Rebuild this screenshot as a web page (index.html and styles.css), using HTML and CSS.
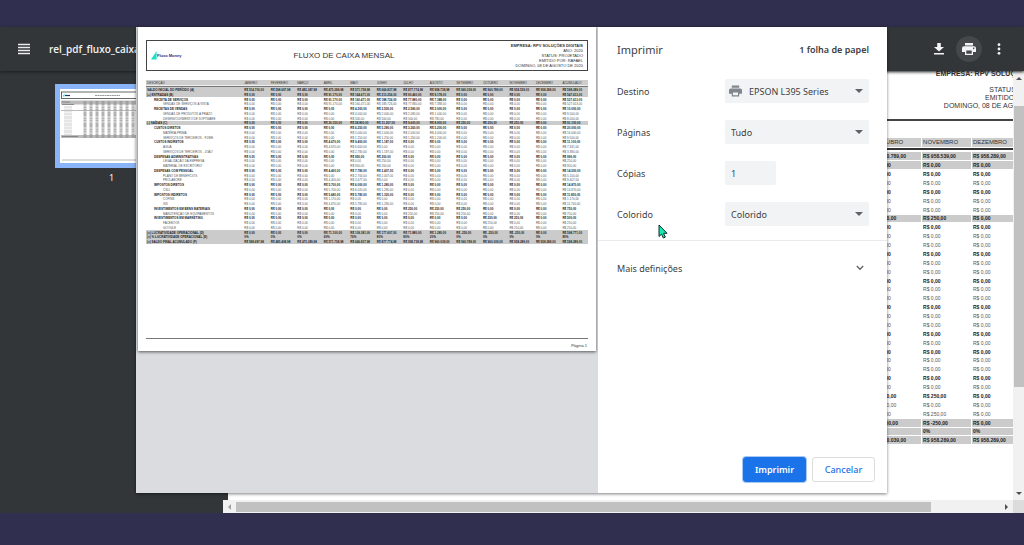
FILE: index.html
```html
<!DOCTYPE html>
<html lang="pt-BR">
<head>
<meta charset="utf-8">
<title>rel_pdf_fluxo_caixa</title>
<link rel="stylesheet" href="styles.css">
</head>
<body>
<main class="viewer">
  <header class="toolbar">
    <button class="icon-btn menu-btn" aria-label="Menu">
      <svg width="14" height="12" viewBox="0 0 14 12"><path d="M1 1.5h12M1 4.5h12M1 7.5h12M1 10.5h12" stroke="#e8eaed" stroke-width="1.5"/></svg>
    </button>
    <span class="file-name">rel_pdf_fluxo_caixa</span>
    <div class="tools">
      <button class="icon-btn" aria-label="Baixar">
        <svg width="10" height="12" viewBox="0 0 10 12"><path d="M3.2 0h3.6v4H10L5 8.600 0 4h3.200zM0 10h10v1.600H0z" fill="#f1f3f4"/></svg>
      </button>
      <button class="icon-btn active" aria-label="Imprimir">
        <svg width="14" height="12" viewBox="0 0 14 12"><path d="M3 0h8v2.500H3zM2 3.200h10a2 2 0 0 1 2 2V9h-3v3H3V9H0V5.200a2 2 0 0 1 2-2zM4.300 7.500v3.200h5.400V7.500zM11.700 4.600a.7.700 0 1 0 .01 0z" fill="#f1f3f4" fill-rule="evenodd"/></svg>
      </button>
      <button class="icon-btn" aria-label="Mais">
        <svg width="4" height="12" viewBox="0 0 4 12" fill="#f1f3f4"><circle cx="2" cy="1.700" r="1.400"/><circle cx="2" cy="6" r="1.400"/><circle cx="2" cy="10.300" r="1.400"/></svg>
      </button>
    </div>
  </header>

  <div class="workspace">
    <aside class="sidebar">
      <a class="thumb" href="#page-1">
        <svg class="thumb-page" viewBox="0 0 104 74">
          <rect width="104" height="74" fill="#fff"/>
          <rect x="1.500" y="3" width="101" height="6.500" fill="#fff" stroke="#444" stroke-width=".8"/>
          <path d="M2.500 7.500l2-3v3z" fill="#1de9c6"/><path d="M5 6.500h5" stroke="#332c77" stroke-width="1.200"/>
          <path d="M35 6.500h25" stroke="#999" stroke-width="1" stroke-dasharray="2 .4"/>
          <g stroke="#bbb"><path d="M1 13.500h102" stroke-width="4"/><path d="M1 21.500h102" stroke-width="1"/><path d="M1 47.500h102" stroke-width="3"/></g>
          <path d="M2 13h8M2 15.500h12M2 47.500h16" stroke="#777" stroke-width=".8"/>
          <g stroke="#999" stroke-width="3" stroke-dasharray=".7 .4"><path d="M25 12v37M31 12v37M37 12v37M43 12v37M49 12v37M55 12v37M61 12v37M67 12v37M73 12v37"/></g>
          <path d="M8 17v29" stroke="#ccc" stroke-width="8" stroke-dasharray=".6 .8"/>
          <path d="M2 71h100" stroke="#999" stroke-width=".7"/>
        </svg>
      </a>
      <span class="thumb-number">1</span>
    </aside>

    <section class="document">
      <div class="doc-clip">
        <article class="report report-large" id="page-1"></article>
      </div>
      <div class="scroll-v"><i class="tri up"></i><div class="track-v"><div class="thumb-v"></div></div><i class="tri down"></i></div>
      <div class="scroll-h"><i class="tri left"></i><div class="track-h"><div class="thumb-h"></div></div><i class="tri right"></i></div>
      <div class="scroll-corner"></div>
    </section>
  </div>

  <div class="dialog" role="dialog" aria-labelledby="dialog-title">
    <div class="preview">
      <article class="report report-small" id="preview-page"></article>
    </div>
    <form class="panel">
      <div class="panel-head">
        <h1 id="dialog-title">Imprimir</h1>
        <strong>1 folha de papel</strong>
      </div>
      <div class="fields">
        <label for="dest">Destino</label>
        <div class="select with-icon">
          <svg class="printer" width="13" height="12" viewBox="0 0 14 12"><path d="M3 0h8v2.500H3zM2 3.200h10a2 2 0 0 1 2 2V9h-3v3H3V9H0V5.200a2 2 0 0 1 2-2zM4.300 7.500v3.200h5.400V7.500z" fill="#80868b" fill-rule="evenodd"/></svg>
          <select id="dest"><option>EPSON L395 Series</option></select>
        </div>
        <label for="pages">Páginas</label>
        <div class="select"><select id="pages"><option>Tudo</option></select></div>
        <label for="copies">Cópias</label>
        <input id="copies" class="copies" type="text" inputmode="numeric" value="1">
        <label for="color">Colorido</label>
        <div class="select"><select id="color"><option>Colorido</option></select></div>
      </div>
      <button type="button" class="more">Mais definições
        <svg width="8" height="6" viewBox="0 0 8 6"><path d="M.8 1L4 4.300 7.200 1" fill="none" stroke="#5f6368" stroke-width="1.300"/></svg>
      </button>
      <div class="actions">
        <button type="button" class="btn primary">Imprimir</button>
        <button type="button" class="btn">Cancelar</button>
      </div>
    </form>
    <svg class="pointer" width="10" height="15" viewBox="0 0 10 15"><path d="M1 1v11.500l2.500-2.400 1.800 3.900 2-.9-1.800-3.800H9z" fill="#16e8b0" stroke="#0b2b2b" stroke-width="1"/></svg>
  </div>
</main>
<script src="report.js"></script>
</body>
</html>
```
FILE: styles.css
```css
* { box-sizing: border-box; }

body {
  margin: 0;
  height: 100vh;
  display: flex;
  flex-direction: column;
  padding: 27px 0 32px;
  background: #312f4f;
  font-family: "Noto Sans", "Open Sans", sans-serif;
  font-size: 9px;
  color: #3c4043;
}

button, input, select { font: inherit; color: inherit; }

.viewer {
  position: relative;
  flex: 1;
  min-height: 0;
  display: flex;
  flex-direction: column;
  background: #323639;
}

/* Toolbar */
.toolbar {
  position: relative;
  height: 44px;
  flex: none;
  display: flex;
  align-items: center;
  gap: 12px;
  padding: 0 12px 0 11px;
  background: #323639;
  box-shadow: 0 1px 3px #1b1d1f;
}
.icon-btn {
  width: 26px;
  height: 26px;
  padding: 0;
  border: 0;
  border-radius: 50%;
  background: none;
  display: grid;
  place-items: center;
}
.icon-btn.active { background: #44484b; }
.file-name { color: #f1f3f4; font-size: 10px; font-weight: 600; font-family: "Open Sans", sans-serif; }
.tools { display: flex; gap: 4px; margin-left: auto; }

/* Sidebar */
.workspace { flex: 1; min-height: 0; display: flex; }
.sidebar {
  width: 223px;
  flex: none;
  display: flex;
  flex-direction: column;
  align-items: center;
  gap: 3px;
  padding-top: 13px;
}
.thumb { display: block; width: 114px; padding: 5px; background: #8ab4f8; }
.thumb-page { display: block; width: 100%; }
.thumb-number { color: #f1f3f4; line-height: 14px; }

/* Document area and scrollbars */
.document {
  flex: 1;
  min-width: 0;
  display: grid;
  grid-template-columns: minmax(0, 1fr) 11px;
  grid-template-rows: minmax(0, 1fr) 13px;
}
.doc-clip { overflow: hidden; background: #fff; border-left: 5px solid #323639; }
.scroll-v, .scroll-h { background: #f1f1f1; display: flex; align-items: center; }
.scroll-v { flex-direction: column; padding: 6px 0 5px; gap: 26px; }
.scroll-h { padding: 0 5px; gap: 5px; }
.scroll-corner { background: #dcdcdc; }
.track-v { flex: 1; width: 10px; }
.track-h { flex: 1; height: 10px; }
.thumb-v { height: 78%; background: #c1c1c1; }
.thumb-h { height: 100%; width: 91%; background: #c1c1c1; }
.tri { border: 3px solid transparent; flex: none; }
.up { border-top: 0; border-bottom-color: #505050; }
.down { border-bottom: 0; border-top-color: #505050; }
.left { border-left: 0; border-right-color: #a3a3a3; }
.right { border-right: 0; border-left-color: #505050; }

/* Report sheet, shared by the document and the print preview */
.report {
  display: flex;
  flex-direction: column;
  background: #fff;
  color: #333;
  font-family: "Liberation Sans", Arial, sans-serif;
}
.report-head {
  display: flex;
  align-items: center;
  border: 1px solid #444;
}
.report-title { flex: 1; margin: 0; text-align: center; font-weight: 400; white-space: nowrap; }
.report-meta { text-align: right; white-space: nowrap; }
.report-meta p { margin: 0; }
.report-logo { display: flex; align-items: center; color: #30277a; font-weight: 700; }
.report-table { width: 100%; table-layout: fixed; border-collapse: separate; border-spacing: 0; }
.report-table th, .report-table td { padding: 0 0 0 1px; text-align: left; white-space: nowrap; font-weight: 400; }
.report-table .name { width: 22%; }
.report-table thead th { background: #cdcdcd; }
.report-table .item > * { color: #555; }
.report-table .total > * { background: #cbcbcb; }
.report-table .total > *, .report-table .group > * { font-weight: 700; color: #222; }
.report-foot { margin-top: auto; text-align: right; border-top: 1px solid #777; }

.report-large { width: 856px; margin-top: -6px; padding: 0 12px; }
.report-large .report-head { height: 56px; padding: 0 8px 6px; border-width: 2px; }
.report-large .report-logo { font-size: 10px; }
.report-large .report-logo svg { width: 14px; }
.report-large .report-title { font-size: 16px; }
.report-large .report-meta { font-size: 7px; line-height: 8px; }
.report-large .report-table { margin-top: 17px; font-size: 5px; line-height: 7px; }
.report-large thead th { height: 9px; font-size: 6px; }
.report-large .rule td { height: 5px; background: linear-gradient(#fff 1px, #333 1px, #333 3px, #fff 3px); }
.report-large tbody tr > * { height: 9px; border-bottom: 1px solid #fff; }
.report-large tbody tr:nth-child(8n) > * { height: 8px; }
.report-large .total > *, .report-large thead th { border-right: 1px solid #fff; }
.report-large .group .name { padding-left: 15px; }
.report-large .item .name { padding-left: 31px; }
.report-large .report-foot { margin-top: 180px; }

.report-small {
  aspect-ratio: 458 / 324;
  margin: 0 2px;
  padding: 13px 8px 0;
  box-shadow: 0 1px 3px #55585c;
}
.report-small .report-head { height: 31px; padding: 0 4px; }
.report-small .report-logo { width: 34px; font-size: 4px; }
.report-small .report-logo svg { width: 6px; }
.report-small .report-title { font-size: 8px; }
.report-small .report-meta { width: 80px; font-size: 4px; line-height: 5px; }
.report-small .report-table { margin-top: 9px; font-size: 3px; line-height: 4px; }
.report-small thead th { height: 5px; }
.report-small .rule td { height: 2px; background: linear-gradient(#eee 1px, #777 1px); }
.report-small tbody tr > * { height: 5px; }
.report-small tbody tr:nth-child(4n) > * { height: 4px; }
.report-small .group .name { padding-left: 8px; }
.report-small .item .name { padding-left: 17px; }
.report-small .report-foot { font-size: 4px; line-height: 8px; padding: 3px 1px 1px; }

/* Print dialog */
.dialog {
  position: absolute;
  inset: 0 137px 20px 136px;
  display: flex;
  background: #fff;
  box-shadow: 0 1px 3px rgba(0, 0, 0, .5);
}
.preview { flex: 1; min-width: 0; overflow: hidden; background: #dadce0; }
.panel { width: 289px; flex: none; display: flex; flex-direction: column; }
.panel-head {
  display: flex;
  align-items: center;
  justify-content: space-between;
  padding: 15px 18px 15px 19px;
  line-height: 16px;
}
.panel-head h1 { margin: 0; font-size: 11px; font-weight: 400; }
.panel-head strong { font-weight: 600; }
.fields {
  display: grid;
  grid-template-columns: minmax(0, 1fr) 144px;
  align-items: center;
  row-gap: 17px;
  padding: 6px 18px 14px 19px;
  border-bottom: 1px solid #e8eaed;
}
.select {
  display: grid;
  align-items: center;
  height: 24px;
  border-radius: 2px;
  background: #f1f3f4;
}
.select > *, .select::after { grid-area: 1 / 1; }
.select::after {
  content: "";
  justify-self: end;
  margin-right: 6px;
  border: 4px solid transparent;
  border-top-color: #5f6368;
  border-bottom: 0;
  pointer-events: none;
}
.select select {
  appearance: none;
  width: 100%;
  height: 24px;
  padding: 0 6px;
  border: 0;
  background: none;
}
.with-icon select { padding-left: 24px; }
.printer { margin-left: 4px; }
.copies {
  width: 51px;
  height: 24px;
  padding: 0 6px;
  border: 0;
  border-radius: 2px;
  background: #f1f3f4;
  color: #1b4f77;
}
.more {
  display: flex;
  align-items: center;
  justify-content: space-between;
  height: 54px;
  padding: 0 23px 0 19px;
  border: 0;
  background: none;
}
.actions {
  margin-top: auto;
  display: flex;
  justify-content: flex-end;
  gap: 6px;
  padding: 0 12px 11px;
}
.btn {
  width: 63px;
  height: 25px;
  padding: 0;
  border: 1px solid #dadce0;
  border-radius: 3px;
  background: #fff;
  color: #1a73e8;
  font-weight: 500;
}
.btn.primary {
  border-color: #1a73e8;
  background: #1a73e8;
  color: #fff;
  font-weight: 600;
  box-shadow: 0 0 0 1px #a9c8f5;
}
.pointer { position: absolute; left: 522px; top: 197px; }
```
FILE: report.js
```javascript
const months = ["JANEIRO", "FEVEREIRO", "MARÇO", "ABRIL", "MAIO", "JUNHO", "JULHO",
  "AGOSTO", "SETEMBRO", "OUTUBRO", "NOVEMBRO", "DEZEMBRO", "ACUMULADO"];

// Kind, name, and one value per column; "0" stands for an empty month.
const rows = [
  ["total", "SALDO INICIAL DO PERÍODO (A)", "514.700,00 598.697,98 485.387,98 475.389,98 571.758,98 666.837,98 877.774,98 958.738,98 960.039,00 960.789,00 958.539,00 958.289,00 598.289,00"],
  ["total", "(+) ENTRADAS (B)", "0 0 0 91.170,00 164.671,00 213.256,00 90.460,00 9.178,00 0 0 0 0 547.613,00"],
  ["group", "RECEITA DE SERVIÇOS", "0 0 0 91.170,00 160.471,00 188.726,00 77.880,00 7.388,00 0 0 0 0 527.613,00"],
  ["item", "VENDAS DE SERVIÇOS À VISTA", "0 0 0 91.170,00 160.471,00 188.726,00 77.880,00 7.388,00 0 0 0 0 527.613,00"],
  ["group", "RECEITAS DE VENDAS", "0 0 0 0 4.200,00 2.500,00 2.580,00 2.000,00 0 0 0 0 10.000,00"],
  ["item", "VENDAS DE PRODUTOS À PRAZO", "0 0 0 0 4.000,00 2.000,00 2.080,00 1.000,00 0 0 0 0 9.500,00"],
  ["item", "DESENVOLVIMENTO DE SOFTWARE", "0 0 0 0 500,00 500,00 500,00 780,00 0 0 0 0 8.000,00"],
  ["total", "(-) SAÍDAS (C)", "0 0 0 20.150,00 58.800,00 31.207,00 9.600,00 8.900,00 250,00 250,00 250,00 0 91.100,00"],
  ["group", "CUSTOS DIRETOS", "0 0 0 0 6.250,00 5.290,00 3.260,00 5.200,00 0 0 0 0 20.000,00"],
  ["item", "MATÉRIA-PRIMA", "0 0 0 0 5.000,00 2.000,00 2.000,00 4.000,00 0 0 0 0 16.000,00"],
  ["item", "SERVIÇOS DE TERCEIROS - PJ/ME", "0 0 0 0 1.250,00 1.250,00 1.260,00 1.200,00 0 0 0 0 9.500,00"],
  ["group", "CUSTOS INDIRETOS", "0 0 0 4.670,00 9.400,00 1.187,00 0 0 0 0 0 0 11.100,00"],
  ["item", "ÁGUA", "0 0 0 4.670,00 6.600,00 0 0 0 0 0 0 0 7.341,00"],
  ["item", "SERVIÇOS DE TERCEIROS - JOÃO", "0 0 0 0 2.780,00 1.187,00 0 0 0 0 0 0 3.380,00"],
  ["group", "DESPESAS ADMINISTRATIVAS", "0 0 0 0 950,00 200,00 0 0 0 0 0 0 990,00"],
  ["item", "LEGALIZAÇÃO DA EMPRESA", "0 0 0 0 0 250,00 0 0 0 0 0 0 250,00"],
  ["item", "MATERIAL DE ESCRITÓRIO", "0 0 0 0 950,00 200,00 0 0 0 0 0 0 950,00"],
  ["group", "DESPESAS COM PESSOAL", "0 0 0 4.400,00 7.780,00 2.407,00 0 0 0 0 0 0 14.500,00"],
  ["item", "PLANO DE BENEFÍCIOS", "0 0 0 0 2.700,00 2.407,00 0 0 0 0 0 0 5.100,00"],
  ["item", "PROLABORE", "0 0 0 4.400,00 2.677,00 0 0 0 0 0 0 0 9.407,00"],
  ["group", "IMPOSTOS DIRETOS", "0 0 0 5.700,00 6.000,00 1.280,00 0 0 0 0 0 0 14.870,00"],
  ["item", "CSLL", "0 0 0 5.700,00 6.020,00 1.280,00 0 0 0 0 0 0 14.870,00"],
  ["group", "IMPOSTOS INDIRETOS", "0 0 0 5.680,00 5.780,00 1.320,00 0 0 0 0 0 0 11.850,00"],
  ["item", "COFINS", "0 0 0 1.170,00 0 0 0 0 0 0 0 0 1.170,00"],
  ["item", "ISS", "0 0 0 4.670,00 5.780,00 1.280,00 0 0 0 0 0 0 11.700,00"],
  ["group", "INVESTIMENTOS EM BENS MATERIAIS", "0 0 0 0 0 0 250,00 250,00 250,00 0 0 0 750,00"],
  ["item", "MANUTENÇÃO DE EQUIPAMENTOS", "0 0 0 0 0 0 250,00 250,00 250,00 0 0 0 750,00"],
  ["group", "INVESTIMENTOS EM MARKETING", "0 0 0 0 0 0 0 0 0 250,00 250,00 0 500,00"],
  ["item", "FACEBOOK", "0 0 0 0 0 0 0 0 0 250,00 0 0 250,00"],
  ["item", "GOOGLE", "0 0 0 0 0 0 0 0 0 0 250,00 0 250,00"],
  ["total", "(=) LUCRATIVIDADE OPERACIONAL (D)", "0 0 0 71.100,00 109.381,00 177.607,00 71.880,00 1.280,00 -250,00 -250,00 -250,00 0 598.771,00"],
  ["total", "(=) % LUCRATIVIDADE OPERACIONAL (E)", "0% 0% 0% 60% 76% 80% 80% 20% 0% 0% 0% 0% 80%"],
  ["total", "(=) SALDO FINAL ACUMULADO (F)", "598.697,98 485.408,98 475.389,98 571.758,98 666.837,98 877.774,98 958.738,98 960.039,00 960.789,00 960.039,00 958.289,00 958.289,00 598.289,00"]
];

function formatValue(value) {
  if (value.endsWith("%")) return value;
  return "R$ " + (value === "0" ? "0,00" : value);
}

function renderReport(target) {
  const head = months.map(m => `<th scope="col">${m}</th>`).join("");
  const body = rows.map(([kind, name, values]) => {
    const cells = values.split(" ").map(v => `<td>${formatValue(v)}</td>`).join("");
    return `<tr class="${kind}"><th scope="row" class="name">${name}</th>${cells}</tr>`;
  }).join("");
  target.innerHTML = `
    <div class="report-head">
      <div class="report-logo">
        <svg viewBox="0 0 14 20"><path d="M0 20L13 0v20z" fill="#14e3c4"/></svg>
        <span>Fluxo Money</span>
      </div>
      <h2 class="report-title">FLUXO DE CAIXA MENSAL</h2>
      <div class="report-meta">
        <p><b>EMPRESA: RPV SOLUÇÕES DIGITAIS</b></p>
        <p>ANO: 2020</p>
        <p>STATUS: PROJETADO</p>
        <p>EMITIDO POR: RAFAEL</p>
        <p>DOMINGO, 08 DE AGOSTO DE 2020</p>
      </div>
    </div>
    <table class="report-table">
      <thead><tr><th scope="col" class="name">DESCRIÇÃO</th>${head}</tr>
      <tr class="rule"><td colspan="14"></td></tr></thead>
      <tbody>${body}</tbody>
    </table>
    <div class="report-foot">Página 1</div>`;
}

document.querySelectorAll(".report").forEach(renderReport);
```
